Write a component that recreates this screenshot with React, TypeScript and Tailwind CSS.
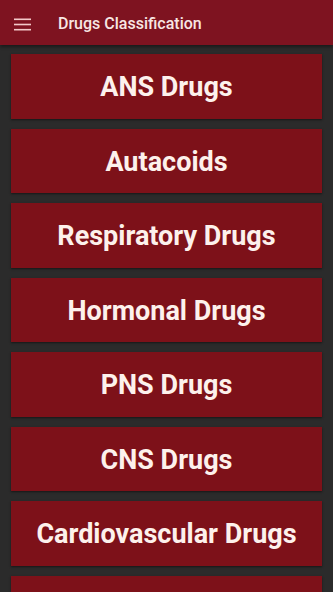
import React from "react";

const items = [
  "ANS Drugs",
  "Autacoids",
  "Respiratory Drugs",
  "Hormonal Drugs",
  "PNS Drugs",
  "CNS Drugs",
  "Cardiovascular Drugs",
];

export default function App() {
  return (
    <div className="w-[333px] h-[592px] overflow-hidden bg-[#2b2b2b] flex flex-col" style={{ fontFamily: "Roboto, 'Noto Sans', sans-serif" }}>
      <div className="h-[45px] shrink-0 bg-[#7e1320] flex items-center pt-[3px] shadow-[0_2px_3px_rgba(0,0,0,0.4)] relative z-10">
        <div className="w-[58px] flex justify-start pl-[14px]">
          <svg width="17" height="13" viewBox="0 0 17 13">
            <rect x="0" y="0.5" width="17" height="1.6" fill="#f3c9c9" />
            <rect x="0" y="5.7" width="17" height="1.6" fill="#f3c9c9" />
            <rect x="0" y="10.9" width="17" height="1.6" fill="#f3c9c9" />
          </svg>
        </div>
        <span className="text-[16px] font-medium text-[#f8e6e3]">Drugs Classification</span>
      </div>
      <div className="flex flex-col gap-[10px] px-[11px] pt-[9px]">
        {items.map((t) => (
          <div
            key={t}
            className="h-[64.5px] shrink-0 bg-[#7d1119] flex items-center justify-center pt-[2px] shadow-[0_1px_2px_rgba(0,0,0,0.5)]"
          >
            <span className="text-[27px] font-bold text-[#fdf1ec]">{t}</span>
          </div>
        ))}
        <div className="h-[64.5px] shrink-0 bg-[#7d1119] shadow-[0_1px_2px_rgba(0,0,0,0.5)]" />
      </div>
    </div>
  );
}
